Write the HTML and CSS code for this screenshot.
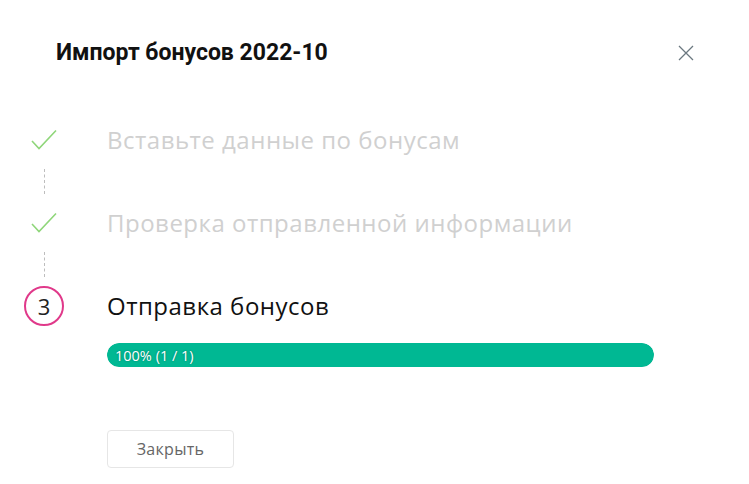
FILE: index.html
```html
<!DOCTYPE html>
<html lang="ru">
<head>
<meta charset="utf-8">
<link rel="stylesheet" href="styles.css">
</head>
<body>
<div class="dialog">
  <div class="header">
    <h1 class="title">Импорт бонусов 2022-10</h1>
    <button class="close" aria-label="Закрыть">
      <svg width="16" height="16" viewBox="0 0 16 16"><path d="M1 1L15 15M15 1L1 15" stroke="#6b7880" stroke-width="1.3" fill="none"/></svg>
    </button>
  </div>
  <div class="steps">
    <div class="step done">
      <div class="marker">
        <svg width="28" height="22" viewBox="0 0 28 22"><path d="M2 12L9 19.5L26 1.5" stroke="#8fd67a" stroke-width="1.6" fill="none"/></svg>
      </div>
      <div class="label">Вставьте данные по бонусам</div>
    </div>
    <div class="connector"><span class="dash"></span></div>
    <div class="step done">
      <div class="marker">
        <svg width="28" height="22" viewBox="0 0 28 22"><path d="M2 12L9 19.5L26 1.5" stroke="#8fd67a" stroke-width="1.6" fill="none"/></svg>
      </div>
      <div class="label">Проверка отправленной информации</div>
    </div>
    <div class="connector"><span class="dash"></span></div>
    <div class="step active">
      <div class="marker"><span class="num">3</span></div>
      <div class="label">Отправка бонусов</div>
    </div>
    <div class="body">
      <div class="progress"><div class="bar" style="width:100%"><span class="ptext">100% (1 / 1)</span></div></div>
      <button class="btn">Закрыть</button>
    </div>
  </div>
</div>
</body>
</html>
```

FILE: styles.css
```css
html, body {
  margin: 0;
  padding: 0;
  background: #fff;
}
.dialog {
  width: 749px;
  height: 484px;
  box-sizing: border-box;
  font-family: "Open Sans", sans-serif;
}
.header {
  display: flex;
  align-items: center;
  justify-content: space-between;
  padding: 40px 55px 0 56px;
  height: 26px;
}
.title {
  margin: 0;
  font-family: Roboto, sans-serif;
  font-weight: 700;
  font-size: 23px;
  line-height: 26px;
  color: #111;
}
.close {
  border: 0;
  background: none;
  padding: 0;
  width: 16px;
  height: 16px;
  display: flex;
}
.steps {
  padding: 54px 0 0 24px;
}
.step {
  display: flex;
  align-items: center;
  height: 40px;
}
.marker {
  width: 40px;
  height: 40px;
  display: flex;
  align-items: center;
  justify-content: center;
  margin-right: 43px;
}
.label {
  font-size: 24px;
  font-weight: 400;
  letter-spacing: 0.5px;
  line-height: 40px;
  color: #111;
}
.done .label {
  color: #d0d0d0;
}
.connector {
  width: 40px;
  height: 43px;
  display: flex;
  justify-content: center;
  align-items: center;
}
.dash {
  display: block;
  width: 0;
  height: 25px;
  border-left: 1px dashed #bdbdbd;
  margin-left: 1px;
}
.num {
  width: 40px;
  height: 40px;
  box-sizing: border-box;
  border: 2.5px solid #e0398a;
  border-radius: 50%;
  display: flex;
  align-items: center;
  justify-content: center;
  font-size: 22px;
  font-weight: 400;
  color: #222;
}
.body {
  padding-left: 83px;
  padding-top: 17px;
}
.progress {
  width: 547px;
  height: 24px;
  border-radius: 12px;
  background: #eee;
  overflow: hidden;
}
.bar {
  height: 100%;
  background: #00b893;
  border-radius: 12px;
  display: flex;
  align-items: center;
}
.ptext {
  padding-left: 8px;
  font-size: 14.5px;
  color: #fff;
  letter-spacing: 0;
  text-shadow: 0 0 2px rgba(0,0,0,0.35);
}
.btn {
  margin-top: 63px;
  width: 127px;
  height: 38px;
  border: 1px solid #e6e6e6;
  border-radius: 4px;
  background: #fff;
  font-family: "Open Sans", sans-serif;
  font-size: 16px;
  letter-spacing: 0.3px;
  font-weight: 400;
  color: #666;
  padding: 0;
}
```
